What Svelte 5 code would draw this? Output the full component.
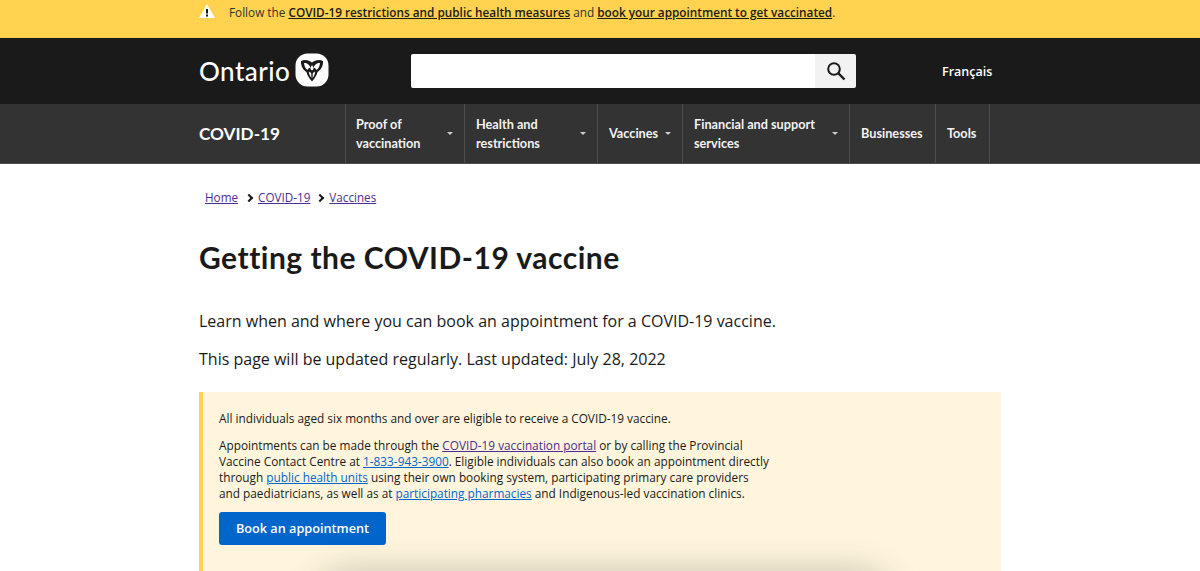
<script>
  const navItems = [
    { label: 'Proof of vaccination', size: 'proof', caret: true },
    { label: 'Health and restrictions', size: 'health', caret: true },
    { label: 'Vaccines', size: 'vaccines', caret: true },
    { label: 'Financial and support services', size: 'financial', caret: true },
    { label: 'Businesses', size: 'businesses', caret: false },
    { label: 'Tools', size: 'tools', caret: false }
  ];
</script>

<div class="page">
  <div class="alert">
    <div class="wrap alert-row">
      <svg width="16" height="14" viewBox="0 0 16 14">
        <path d="M8 0 L16 14 L0 14 Z" fill="#fff" />
        <rect x="7" y="5" width="2" height="4.5" fill="#1a1a1a" />
        <rect x="7" y="10.5" width="2" height="2" fill="#1a1a1a" />
      </svg>
      <p>Follow the <a href="#a">COVID-19 restrictions and public health measures</a> and <a href="#b">book your appointment to get vaccinated</a>.</p>
    </div>
  </div>

  <header class="header">
    <div class="wrap header-row">
      <div class="logo">
        <span class="wordmark">Ontario</span>
        <svg width="34" height="34" viewBox="0 0 34 34">
          <rect width="33" height="33" x="0.5" y="0.5" rx="12" fill="#fff" />
          <path d="M17 28.500 C14 25 12 22 11.500 19 C8.500 17.500 5.500 13 6 8 C10 6 14 7 17 9.500 C20 7 24 6 28 8 C28.500 13 25.500 17.500 22.500 19 C22 22 20 25 17 28.500 Z" fill="#1a1a1a" />
          <path d="M9 10 C11.500 9.500 14.500 11.500 15.500 14.500 C14 15 12.800 16 12.500 17 C10.500 15.500 9 12.500 9 10 Z M25 10 C22.500 9.500 19.500 11.500 18.500 14.500 C20 15 21.200 16 21.500 17 C23.500 15.500 25 12.500 25 10 Z M17 12 C18 13.200 18.500 14.500 18.500 16 L17 17.500 L15.500 16 C15.500 14.500 16 13.200 17 12 Z M13.800 18.500 L16.200 20 L16.400 25 C15 23 14 21 13.800 18.500 Z M20.200 18.500 L17.800 20 L17.600 25 C19 23 20 21 20.200 18.500 Z" fill="#fff" />
        </svg>
      </div>
      <form class="search" on:submit|preventDefault>
        <input type="text" aria-label="Search" />
        <button type="submit" aria-label="Submit search">
          <svg width="20" height="20" viewBox="0 0 20 20" fill="none" stroke="#1a1a1a" stroke-width="2">
            <circle cx="8" cy="8" r="5.800" />
            <path d="M12.200 12.200 L18.500 18.500" stroke-width="2.400" />
          </svg>
        </button>
      </form>
      <a class="lang" href="#fr">Français</a>
    </div>
  </header>

  <nav class="nav">
    <div class="wrap nav-row">
      <a class="nav-title" href="#covid">COVID-19</a>
      <ul>
        {#each navItems as item}
          <li class={item.size}>
            <span>{item.label}</span>
            {#if item.caret}<i class="caret"></i>{/if}
          </li>
        {/each}
      </ul>
    </div>
  </nav>

  <main class="wrap main">
    <ol class="crumbs">
      <li><a href="#home">Home</a></li>
      <li><a href="#covid">COVID-19</a></li>
      <li><a href="#vaccines">Vaccines</a></li>
    </ol>

    <h1>Getting the COVID-19 vaccine</h1>

    <p class="lead">Learn when and where you can book an appointment for a COVID-19 vaccine.</p>
    <p class="lead">This page will be updated regularly. Last updated: July 28, 2022</p>

    <section class="callout">
      <p>All individuals aged six months and over are eligible to receive a COVID-19 vaccine.</p>
      <p>Appointments can be made through the <a class="visited" href="#portal">COVID-19 vaccination portal</a> or by calling the Provincial Vaccine Contact Centre at <a href="#tel">1-833-943-3900</a>. Eligible individuals can also book an appointment directly through <a href="#phu">public health units</a> using their own booking system, participating primary care providers and paediatricians, as well as at <a href="#pharm">participating pharmacies</a> and Indigenous-led vaccination clinics.</p>
      <a class="btn" href="#book">Book an appointment</a>
      <div class="shade"></div>
    </section>
  </main>
</div>

<style>
  :global(body) {
    margin: 0;
    background: #fff;
    overflow: hidden;
  }
  .page {
    height: 571px;
    overflow: hidden;
    font-family: "Open Sans", sans-serif;
    color: #1a1a1a;
  }
  .wrap {
    width: 802px;
    margin: 0 auto;
  }
  .alert {
    background: #ffd24f;
    height: 38px;
  }
  .alert-row {
    display: flex;
    align-items: flex-start;
    gap: 14px;
    padding-top: 4px;
  }
  .alert p {
    margin: 0;
    font-size: 11.770px;
    line-height: 17px;
    color: #333;
  }
  .alert a {
    color: #1a1a1a;
    font-weight: 600;
  }
  .header {
    background: #1a1a1a;
    height: 66px;
  }
  .header-row {
    display: flex;
    align-items: center;
    height: 100%;
  }
  .logo {
    display: flex;
    align-items: center;
    gap: 5px;
    width: 212px;
    margin-top: -2px;
  }
  .wordmark {
    padding-top: 2px;
    font-family: Lato, sans-serif;
    font-size: 26px;
    font-weight: 500;
    color: #fff;
    letter-spacing: 0.45px;
  }
  .search {
    display: flex;
    width: 445px;
    height: 34px;
    border-radius: 2px;
    overflow: hidden;
  }
  .search input {
    flex: 1;
    border: 0;
    padding: 0;
    background: #fff;
  }
  .search button {
    width: 41px;
    border: 0;
    padding: 0;
    background: #f2f2f2;
    display: flex;
    align-items: center;
    justify-content: center;
  }
  .lang {
    margin-left: 86px;
    color: #fff;
    font-size: 12.500px;
    font-weight: 600;
    text-decoration: none;
  }
  .nav {
    background: #333;
    height: 60px;
    border-bottom: 1px solid #4d4d4d;
    box-sizing: border-box;
  }
  .nav-row {
    display: flex;
    height: 100%;
  }
  .nav-title {
    width: 146px;
    align-self: center;
    color: #fff;
    font-family: Lato, sans-serif;
    font-weight: 700;
    font-size: 17.200px;
    text-decoration: none;
  }
  .nav ul {
    display: flex;
    margin: 0;
    padding: 0;
    list-style: none;
    border-right: 1px solid #4d4d4d;
  }
  .nav li {
    box-sizing: border-box;
    display: flex;
    align-items: center;
    justify-content: space-between;
    padding: 0 11px;
    border-left: 1px solid #4d4d4d;
    color: #f2f2f2;
    font-family: Lato, sans-serif;
    font-size: 12.700px;
    font-weight: 700;
    line-height: 19px;
  }
  .nav li.proof { width: 119px; padding-left: 10px; }
  .health { width: 133px; }
  .vaccines { width: 85px; }
  .financial { width: 167px; }
  .businesses { width: 86px; }
  .tools { width: 54px; }
  .proof span { width: 80px; }
  .health span { width: 80px; }
  .financial span { width: 130px; }
  .caret {
    width: 0;
    height: 0;
    border-left: 3px solid transparent;
    border-right: 3px solid transparent;
    border-top: 3px solid #ccc;
  }
  .crumbs {
    display: flex;
    margin: 0;
    padding: 25px 0 0 6px;
    list-style: none;
    font-size: 11.700px;
    line-height: 17px;
  }
  .crumbs li:first-child {
    padding-right: 1px;
  }
  .crumbs li + li {
    margin-left: 7px;
    display: flex;
    align-items: center;
  }
  .crumbs li + li::before {
    content: '';
    width: 4px;
    height: 4px;
    margin-right: 6px;
    border-top: 2px solid #1a1a1a;
    border-right: 2px solid #1a1a1a;
    transform: rotate(45deg);
  }
  .crumbs a {
    color: #4c2c92;
  }
  h1 {
    margin: 32px 0 0;
    font-family: Lato, sans-serif;
    font-size: 30px;
    line-height: 38px;
    font-weight: 700;
    letter-spacing: 0.5px;
    color: #1a1a1a;
  }
  .lead {
    margin: 0 0 14px;
    font-size: 16px;
    line-height: 24px;
  }
  h1 + .lead {
    margin-top: 33px;
  }
  .callout {
    position: relative;
    box-sizing: border-box;
    height: 300px;
    margin-top: 21px;
    padding: 18px 20px 0 16px;
    border-left: 4px solid #ffd24f;
    background: #fef5dc;
    overflow: hidden;
  }
  .callout p {
    width: 552px;
    margin: 0 0 11px;
    font-size: 11.800px;
    line-height: 16px;
  }
  .callout a {
    color: #0066cc;
  }
  .callout a.visited {
    color: #4c2c92;
  }
  .callout a.btn {
    display: inline-block;
    box-sizing: border-box;
    width: 167px;
    height: 33px;
    border-radius: 3px;
    background: #0066cc;
    color: #fff;
    font-size: 12.700px;
    font-weight: 600;
    line-height: 33px;
    text-align: center;
    text-decoration: none;
  }
  .shade {
    position: absolute;
    left: 115px;
    top: 181px;
    width: 570px;
    height: 60px;
    border-radius: 30px;
    box-shadow: 0 0 34px rgba(60, 60, 60, 0.3);
    background: #fff;
  }
</style>
